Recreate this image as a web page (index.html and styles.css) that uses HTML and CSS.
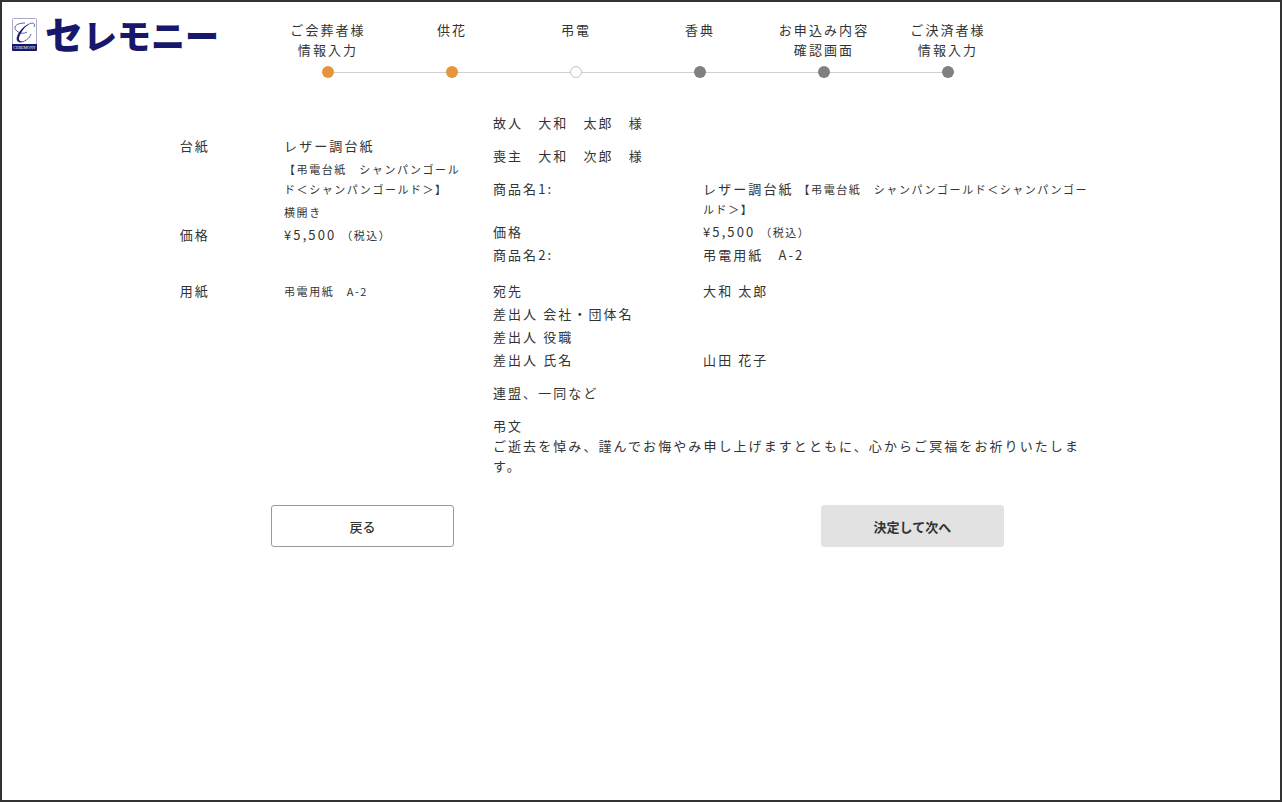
FILE: index.html
```html
<!DOCTYPE html>
<html lang="ja">
<head>
    <meta charset="UTF-8">
    <meta name="viewport" content="width=device-width, initial-scale=1.0">
    <title>弔電 - セレモニー</title>
    <link rel="stylesheet" href="styles.css">
</head>
<body>
    <header class="header">
        <a class="logo" href="#">
            <svg class="logo-mark" viewBox="0 0 25 33" aria-hidden="true">
                <rect x="0.5" y="0.5" width="24" height="32" rx="1" fill="#fff" stroke="#aaaacb"/>
                <path d="M0 26h25v6q0 1-1 1H1q-1 0-1-1z" fill="#17176b"/>
                <path d="M22 9C24 4 19 4 14 8C7 13 2 22 7 24C12 25 18 20 19 16M15 14C9 18 2 12 3 9C4 6 9 5 13 5" fill="none" stroke="#5b5b98" stroke-width="1"/>
                <path d="M17 6C11 8 5 16 5 21C5 24 8 25 11 23C6 24 6 20 9 15C11 11 14 8 17 6z" fill="#17176b"/>
                <text x="12.5" y="31" class="mark-text">CEREMONY</text>
            </svg>
            <span class="logo-name">セレモニー</span>
        </a>
        <ol class="steps">
            <li class="step done"><span>ご会葬者様<br>情報入力</span></li>
            <li class="step done"><span>供花</span></li>
            <li class="step current"><span>弔電</span></li>
            <li class="step"><span>香典</span></li>
            <li class="step"><span>お申込み内容<br>確認画面</span></li>
            <li class="step"><span>ご決済者様<br>情報入力</span></li>
        </ol>
    </header>

    <main class="main">
        <div class="content">
            <dl class="item">
                <dt>台紙</dt>
                <dd>
                    レザー調台紙
                    <p class="small spec">【弔電台紙　シャンパンゴールド＜シャンパンゴールド＞】</p>
                    <p class="small">横開き</p>
                </dd>
                <dt>価格</dt>
                <dd>¥5,500 <span class="small">（税込）</span></dd>
                <dt class="paper">用紙</dt>
                <dd class="paper small">弔電用紙　A-2</dd>
            </dl>

            <section class="detail">
                <p>故人　大和　太郎　様</p>
                <p>喪主　大和　次郎　様</p>
                <dl class="rows">
                    <dt>商品名1:</dt>
                    <dd>レザー調台紙 <span class="small">【弔電台紙　シャンパンゴールド＜シャンパンゴールド＞】</span></dd>
                    <dt>価格</dt>
                    <dd>¥5,500 <span class="small">（税込）</span></dd>
                    <dt>商品名2:</dt>
                    <dd>弔電用紙　A-2</dd>
                </dl>
                <dl class="rows">
                    <dt>宛先</dt>
                    <dd>大和 太郎</dd>
                    <dt>差出人 会社・団体名</dt>
                    <dd></dd>
                    <dt>差出人 役職</dt>
                    <dd></dd>
                    <dt>差出人 氏名</dt>
                    <dd>山田 花子</dd>
                </dl>
                <p>連盟、一同など</p>
                <p>弔文<br>ご逝去を悼み、謹んでお悔やみ申し上げますとともに、心からご冥福をお祈りいたします。</p>
            </section>
        </div>

        <div class="buttons">
            <button type="button" class="btn btn-back">戻る</button>
            <button type="submit" class="btn btn-next">決定して次へ</button>
        </div>
    </main>
</body>
</html>
```

FILE: styles.css
```css
*, *::before, *::after {
    box-sizing: border-box;
}
body {
    margin: 0;
    min-height: 100vh;
    border: 2px solid #333;
    background-color: #fff;
    color: #333;
    font-family: "Noto Sans CJK JP", sans-serif;
    font-size: 13px;
    line-height: 20px;
    letter-spacing: 0.16em;
}
p, dl, dd, ol {
    margin: 0;
    padding: 0;
}

/* header */
.header {
    display: flex;
    align-items: flex-start;
}
.logo {
    display: flex;
    flex: 0 0 264px;
    align-items: flex-start;
    gap: 8px;
    padding: 16px 0 0 10px;
    color: #17176b;
    text-decoration: none;
}
.logo-mark {
    width: 25px;
    height: 33px;
}
.mark-text {
    fill: #fff;
    font-family: "Liberation Serif", serif;
    font-size: 4px;
    letter-spacing: 0;
    text-anchor: middle;
}
.logo-name {
    font-size: 34px;
    font-weight: 900;
    line-height: 30px;
    letter-spacing: 0;
}
.logo-name::first-letter {
    font-size: 38px;
    line-height: 30px;
}
.steps {
    display: flex;
    flex: 0 1 744px;
    padding-top: 18px;
    list-style: none;
}
.step {
    position: relative;
    flex: 1;
    text-align: center;
}
.step span {
    display: block;
    height: 46px;
}
.step::after {
    content: "";
    position: relative;
    display: block;
    width: 12px;
    height: 12px;
    margin: 0 auto;
    border-radius: 50%;
    background-color: #808080;
}
.step.done::after {
    background-color: #e6953e;
}
.step.current::after {
    border: 1px solid #c4c4c4;
    background-color: #fff;
}
/* line to the next step */
.step:not(:last-child)::before {
    content: "";
    position: absolute;
    top: 52px;
    left: 50%;
    width: 100%;
    height: 1px;
    background-color: #d0d0d0;
}

/* contents */
.main {
    padding: 35px 14.6% 0 13.9%;
}
.content {
    display: grid;
    grid-template-columns: 313fr 600fr;
}
.item {
    display: grid;
    grid-template-columns: 1fr 2fr;
    row-gap: 3px;
    align-content: start;
    padding-top: 23px;
}
.item dd {
    padding-right: 24px;
}
.item .spec {
    margin: 3px 0;
}
.paper {
    margin-top: 33px;
}
.small {
    font-size: 11px;
    letter-spacing: 0.14em;
}
.detail p {
    margin-bottom: 13px;
}
.rows {
    display: grid;
    grid-template-columns: 210fr 390fr;
    row-gap: 3px;
    margin-bottom: 16px;
}
.rows + p {
    margin-top: -3px;
}

/* buttons */
.buttons {
    display: flex;
    justify-content: space-between;
    padding: 16px 9.8% 0 10%;
}
.btn {
    width: 183px;
    height: 42px;
    border: 1px solid #999;
    border-radius: 3px;
    background-color: #fff;
    color: #333;
    font-family: inherit;
    font-size: 13px;
    font-weight: 500;
}
.btn-next {
    border-color: #e2e2e2;
    background-color: #e2e2e2;
    font-weight: 700;
}
```
